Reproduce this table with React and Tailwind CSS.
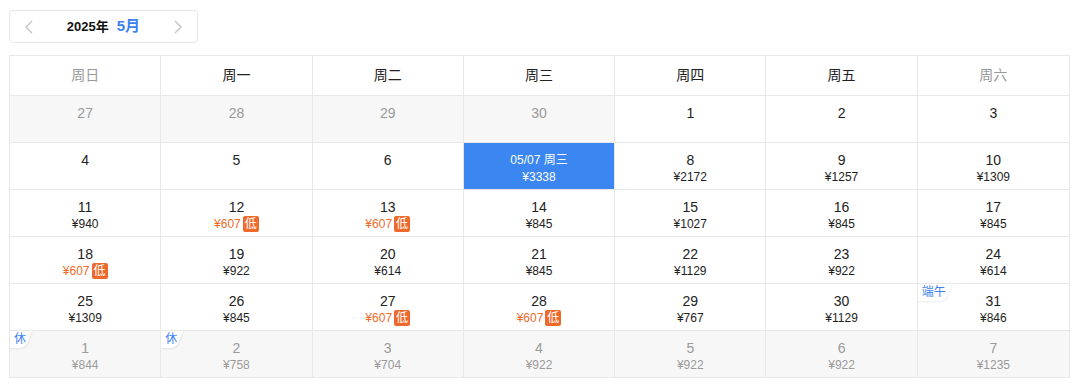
import React from 'react';

// one row of the price calendar = 7 cells
const weeks = ['周日', '周一', '周二', '周三', '周四', '周五', '周六'];

const rows = [
  [
    { d: 27, muted: true }, { d: 28, muted: true }, { d: 29, muted: true }, { d: 30, muted: true },
    { d: 1 }, { d: 2 }, { d: 3 },
  ],
  [
    { d: 4 }, { d: 5 }, { d: 6 },
    { d: 7, selected: true, price: 3338 },
    { d: 8, price: 2172 }, { d: 9, price: 1257 }, { d: 10, price: 1309 },
  ],
  [
    { d: 11, price: 940 }, { d: 12, price: 607, low: true }, { d: 13, price: 607, low: true },
    { d: 14, price: 845 }, { d: 15, price: 1027 }, { d: 16, price: 845 }, { d: 17, price: 845 },
  ],
  [
    { d: 18, price: 607, low: true }, { d: 19, price: 922 }, { d: 20, price: 614 },
    { d: 21, price: 845 }, { d: 22, price: 1129 }, { d: 23, price: 922 }, { d: 24, price: 614 },
  ],
  [
    { d: 25, price: 1309 }, { d: 26, price: 845 }, { d: 27, price: 607, low: true },
    { d: 28, price: 607, low: true }, { d: 29, price: 767 }, { d: 30, price: 1129 },
    { d: 31, price: 846, tag: '端午' },
  ],
  [
    { d: 1, price: 844, muted: true, tag: '休' }, { d: 2, price: 758, muted: true, tag: '休' },
    { d: 3, price: 704, muted: true }, { d: 4, price: 922, muted: true },
    { d: 5, price: 922, muted: true }, { d: 6, price: 922, muted: true },
    { d: 7, price: 1235, muted: true },
  ],
];

const Tag = ({ text }) => (
  <span className="absolute left-0 top-0 z-10 h-[17px] pl-[4px] pr-[6px] text-[12px] leading-[17px] text-[#3b82f0]">
    {/* slanted white label behind the text */}
    <span className="absolute inset-y-0 left-[-8px] right-0 -z-10 origin-top -skew-x-[20deg] rounded-br-[6px] bg-white shadow-[1px_1px_2px_rgba(0,0,0,0.08)]" />
    {text}
  </span>
);

const Cell = ({ c, last }) => {
  if (c.selected) {
    return (
      <div className={`flex h-[47px] flex-col items-center border-b border-[#e8e8e8] bg-[#3b86f0] pt-2 text-white ${last ? '' : 'border-r'}`}>
        <span className="text-[12px] leading-[18px]">05/07 周三</span>
        <span className="text-[12px] leading-[16px]">¥{c.price}</span>
      </div>
    );
  }
  return (
    <div
      className={`relative flex h-[47px] flex-col items-center overflow-hidden border-b border-[#e8e8e8] pt-2 ${last ? '' : 'border-r'} ${c.muted ? 'bg-[#f7f7f7]' : 'bg-white'}`}
    >
      {c.tag && <Tag text={c.tag} />}
      <span className={`text-[14px] leading-[18px] ${c.muted ? 'text-[#9a9a9a]' : 'text-[#222]'}`}>{c.d}</span>
      {c.price && (
        <span className="flex items-center gap-[2px] text-[12px] leading-[16px]">
          <span className={c.low ? 'text-[#f06a28]' : c.muted ? 'text-[#9a9a9a]' : 'text-[#222]'}>¥{c.price}</span>
          {c.low && (
            <span className="flex h-[16px] w-[16px] items-center justify-center rounded-[2px] bg-[#ee6a2c] text-[12px] leading-none text-white">
              低
            </span>
          )}
        </span>
      )}
    </div>
  );
};

const App = () => {
  return (
    <div
      className="min-h-screen w-full bg-white"
      style={{ fontFamily: "'Liberation Sans', 'Noto Sans CJK SC', sans-serif" }}
    >
      {/* Month switcher */}
      <div className="pl-[9px] pt-[10px]">
        <div className="flex h-[33px] w-[189px] items-center justify-between rounded-[4px] border border-[#e6e6e6] px-[15px]">
          <svg width="8" height="14" viewBox="0 0 8 14" fill="none">
            <polyline points="7,1 1,7 7,13" stroke="#c4c4c4" strokeWidth="1.4" />
          </svg>
          <div className="flex items-baseline gap-[8px]">
            <span className="text-[13px] font-bold text-[#111]">2025年</span>
            <span className="text-[15px] font-bold text-[#3b82f0]">5月</span>
          </div>
          <svg width="8" height="14" viewBox="0 0 8 14" fill="none">
            <polyline points="1,1 7,7 1,13" stroke="#c4c4c4" strokeWidth="1.4" />
          </svg>
        </div>
      </div>

      {/* Calendar table */}
      <div className="ml-[9px] mt-[12px] w-[1061px] border-l border-r border-t border-[#e8e8e8]">
        <div className="grid grid-cols-7">
          {weeks.map((w, i) => (
            <div
              key={w}
              className={`flex h-[40px] items-center justify-center border-b border-[#e8e8e8] text-[14px] ${i < 6 ? 'border-r' : ''} ${i === 0 || i === 6 ? 'text-[#999]' : 'text-[#222]'}`}
            >
              {w}
            </div>
          ))}
        </div>
        {rows.map((r, ri) => (
          <div key={ri} className="grid grid-cols-7">
            {r.map((c, ci) => (
              <Cell key={ci} c={c} last={ci === 6} />
            ))}
          </div>
        ))}
      </div>
    </div>
  );
};

export default App;
